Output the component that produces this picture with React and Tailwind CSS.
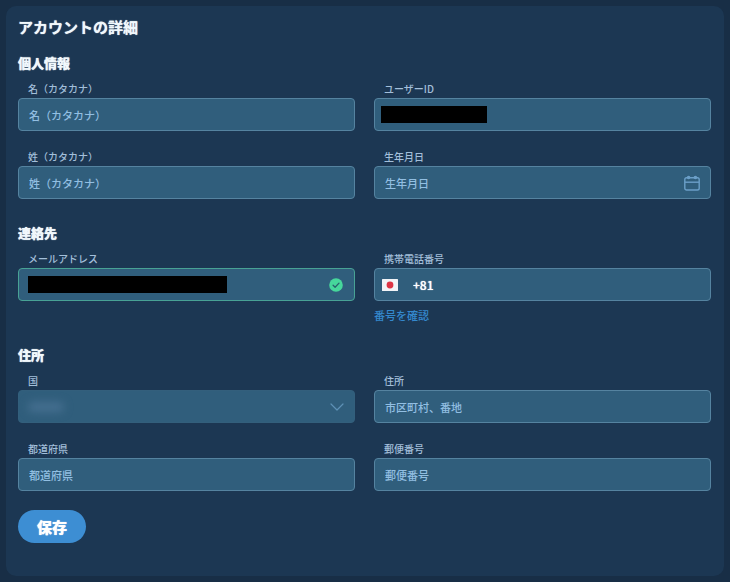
import React from "react";

const inputClass =
  "h-full min-w-0 flex-1 bg-transparent text-white outline-none placeholder:text-[#92bfe2] placeholder:opacity-100";

function Field({ id, label, border = "border-[#5583a0]", padding = "px-[10px]", children }) {
  return (
    <div className="min-w-0">
      <label htmlFor={id} className="block pb-0.5 pl-[10px] text-[10px] leading-[14px] font-medium text-[#a3bfda]">
        {label}
      </label>
      <div className={`flex h-[33px] items-center rounded-[4px] border bg-[#305e7c] ${border} ${padding}`}>
        {children}
      </div>
    </div>
  );
}

function TextField({ id, label, placeholder, children }) {
  return (
    <Field id={id} label={label}>
      <input id={id} type="text" placeholder={placeholder} className={`${inputClass} text-[11px] font-medium`} />
      {children}
    </Field>
  );
}

function Heading({ children }) {
  return (
    <h2 className="mb-[9px] text-[13px] leading-5 font-black text-[#f1f8fc] [text-shadow:0_0_1px_currentColor]">
      {children}
    </h2>
  );
}

const gridClass = "grid grid-cols-2 gap-[19px]";

function CalendarIcon() {
  return (
    <svg className="h-4 w-4 shrink-0" viewBox="0 0 16 16" fill="none" stroke="#6b9fc8" strokeWidth="1.4" aria-hidden="true">
      <rect x="0.8" y="2.7" width="14.4" height="12.3" rx="1.8" />
      <path d="M0.8 7.2h14.4" />
      <circle cx="4.6" cy="2.5" r="1.8" fill="#6b9fc8" stroke="none" />
      <circle cx="11.4" cy="2.5" r="1.8" fill="#6b9fc8" stroke="none" />
    </svg>
  );
}

function VerifiedIcon() {
  return (
    <svg className="mr-px h-[14px] w-[14px] shrink-0" viewBox="0 0 14 14" fill="none" aria-hidden="true">
      <circle cx="7" cy="7" r="6.8" fill="#46d79b" />
      <path d="M4.1 7.2l2 2L10 5.1" stroke="#28616d" strokeWidth="1.3" strokeLinecap="round" strokeLinejoin="round" />
    </svg>
  );
}

function JapanFlag() {
  return (
    <svg className="h-3 w-4 shrink-0" viewBox="0 0 16 12" aria-hidden="true">
      <rect width="16" height="12" rx="0.5" fill="#f1f4f7" />
      <circle cx="8" cy="6" r="3.4" fill="#dc3545" />
    </svg>
  );
}

export default function App() {
  return (
    <main
      lang="ja"
      className="min-h-screen bg-[#182e46] p-1.5 font-['Noto_Sans_CJK_JP',sans-serif]"
    >
      <form
        onSubmit={(e) => e.preventDefault()}
        className="rounded-[10px] bg-[#1c3753] pt-3 pr-[13px] pb-[33px] pl-3"
      >
        <h1 className="pb-0.5 text-[15px] leading-[18px] font-bold text-[#f1f8fc] [text-shadow:0_0_1px_currentColor]">
          アカウントの詳細
        </h1>

        <section className="mt-[15px]">
          <Heading>個人情報</Heading>
          <div className={gridClass}>
            <TextField id="first-name" label="名（カタカナ）" placeholder="名（カタカナ）" />
            <Field id="user-id" label="ユーザーID" padding="px-[6px]">
              <span className="h-[17px] w-[106px] shrink-0 bg-black" />
              <input id="user-id" type="text" className={`${inputClass} text-[11px] font-medium`} />
            </Field>
            <TextField id="last-name" label="姓（カタカナ）" placeholder="姓（カタカナ）" />
            <TextField id="birthday" label="生年月日" placeholder="生年月日">
              <CalendarIcon />
            </TextField>
          </div>
        </section>

        <section className="mt-6">
          <Heading>連絡先</Heading>
          <div className={gridClass}>
            <Field id="email" label="メールアドレス" border="border-[#48a295]" padding="pr-[10px] pl-[9px]">
              <span className="h-[17px] w-[199px] shrink-0 bg-black" />
              <input id="email" type="email" className={`${inputClass} text-[11px] font-medium`} />
              <VerifiedIcon />
            </Field>
            <div>
              <Field id="phone" label="携帯電話番号" padding="px-[7px]">
                <JapanFlag />
                <input
                  id="phone"
                  type="tel"
                  defaultValue="+81"
                  className={`${inputClass} pl-[15px] text-[12px] font-medium [text-shadow:0_0_1px_currentColor]`}
                />
              </Field>
              <a href="#verify" className="mt-1 block w-fit text-[11px] leading-5 font-medium text-[#3488cd]">
                番号を確認
              </a>
            </div>
          </div>
        </section>

        <section className="mt-5">
          <Heading>住所</Heading>
          <div className={gridClass}>
            <Field id="country" label="国" border="border-[#335f7c]" padding="pr-[10px] pl-[9px]">
              <span className="h-[10px] w-9 shrink-0 rounded-full bg-[#456f90] blur-[4px]" />
              <select id="country" disabled className="h-full min-w-0 flex-1 appearance-none bg-transparent outline-none">
                <option value="" />
              </select>
              <svg className="h-[14px] w-[14px] shrink-0" viewBox="0 0 14 14" fill="none" stroke="#5d91b5" strokeWidth="1.2" aria-hidden="true">
                <path d="M1 4l6 6 6-6" strokeLinecap="round" strokeLinejoin="round" />
              </svg>
            </Field>
            <TextField id="address" label="住所" placeholder="市区町村、番地" />
            <TextField id="prefecture" label="都道府県" placeholder="都道府県" />
            <TextField id="postal-code" label="郵便番号" placeholder="郵便番号" />
          </div>
        </section>

        <button
          type="submit"
          className="mt-[19px] block h-[33px] rounded-full bg-[#3d8ed3] px-[19px] text-[15px] leading-5 font-black text-white [text-shadow:0_0_1px_currentColor]"
        >
          保存
        </button>
      </form>
    </main>
  );
}
